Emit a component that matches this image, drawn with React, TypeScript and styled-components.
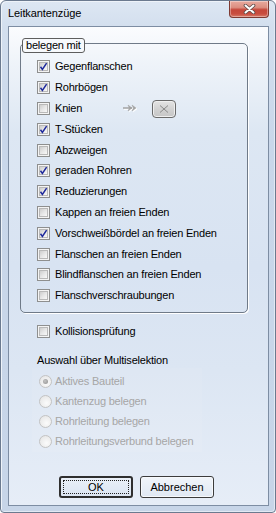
import React from 'react';
import styled, { createGlobalStyle, css } from 'styled-components';

const Global = createGlobalStyle`
  html, body { margin: 0; padding: 0; background: #ffffff; }
  body { font-family: "Liberation Sans", Arial, sans-serif; font-size: 11px; color: #000; }
  * { box-sizing: border-box; }
`;

const Window = styled.div`
  width: 276px;
  height: 513px;
  display: flex;
  flex-direction: column;
  border: 1px solid #6b7a8f;
  border-radius: 6px 6px 4px 4px;
  background: linear-gradient(180deg, #dde7f3 0px, #d3dfee 26px, #c9d7ea 140px, #c7d5e8 100%);
  box-shadow: inset 1px 1px 0 #eef3f9, inset -1px -1px 0 #e2e9f3;
  overflow: hidden;
`;

const TitleBar = styled.div`
  height: 25px;
  flex: 0 0 25px;
  display: flex;
  align-items: flex-start;
`;

const TitleText = styled.div`
  padding: 6px 0 0 7px;
  font-size: 11px;
  line-height: 13px;
  letter-spacing: -0.1px;
  color: #000;
`;

const CloseButton = styled.div`
  margin-left: auto;
  margin-right: 6px;
  width: 40px;
  height: 17px;
  border: 1px solid #7e3a32;
  border-top: none;
  border-radius: 0 0 4px 4px;
  background: linear-gradient(180deg, #e8aa9e 0%, #dc8f81 40%, #c5473a 55%, #c84d3f 80%, #d87a68 100%);
  box-shadow: inset 0 0 0 1px rgba(255, 255, 255, 0.35);
  display: flex;
  align-items: center;
  justify-content: center;
`;

const Client = styled.div`
  flex: 1;
  margin: 0 6px 6px 7px;
  border: 1px solid #7d8da3;
  background: linear-gradient(180deg, #fbfcfe 0%, #eef3f9 8%, #dde7f3 22%, #d8e3f2 50%, #dce6f3 72%, #e6edf7 100%);
  display: flex;
  flex-direction: column;
`;

const Group = styled.div`
  position: relative;
  margin: 16px 20px 0 11px;
  border: 1px solid #6f7a88;
  border-radius: 5px;
  box-shadow: 1px 1px 0 #ffffff;
  padding: 12.6px 0 5.8px 16px;
`;

const Legend = styled.div`
  position: absolute;
  left: 1px;
  top: -6px;
  height: 15px;
  padding: 0 3px;
  border: 1px solid #5e5e5e;
  border-radius: 3px;
  background: #f7f9fc;
  font-size: 11px;
  line-height: 13px;
  letter-spacing: -0.2px;
`;

const Row = styled.div<{ $indent?: number }>`
  height: 20.8px;
  display: flex;
  align-items: center;
  gap: 5px;
  margin-left: ${(p) => p.$indent ?? 0}px;
`;

const Box = styled.span`
  position: relative;
  width: 13px;
  height: 13px;
  flex: 0 0 13px;
  border: 1px solid #8e8f8f;
  background: #f4f4f4;
  display: flex;
  align-items: center;
  justify-content: center;
  &::before {
    content: '';
    position: absolute;
    inset: 1px;
    border: 1px solid #b9b9b9;
    background: linear-gradient(135deg, #cdcdcd 0%, #e6e6e6 50%, #f8f8f8 100%);
  }
  svg { position: relative; }
`;

const Label = styled.span<{ $min?: number; $disabled?: boolean }>`
  font-size: 11px;
  line-height: 13px;
  letter-spacing: -0.2px;
  white-space: nowrap;
  color: ${(p) => (p.$disabled ? '#a6a6a6' : '#000')};
  ${(p) => p.$min && css`min-width: ${p.$min}px;`}
`;

const ArrowIcon = styled.svg`
  flex: 0 0 auto;
  margin-top: 1px;
`;

const SmallButton = styled.div`
  margin-left: 8px;
  width: 24px;
  height: 18px;
  border: 1px solid #6a6a6a;
  border-radius: 4px;
  background: linear-gradient(180deg, #e4e4e4 0%, #d2d2d2 50%, #c6c6c6 100%);
  box-shadow: inset 0 0 0 1px #efefef;
  display: flex;
  align-items: center;
  justify-content: center;
`;

const Kollision = styled(Row)`
  margin-top: 8.6px;
`;

const SectionLabel = styled.div`
  margin: 9.6px 0 0 28px;
  height: 16px;
  line-height: 16px;
  font-size: 11px;
  letter-spacing: -0.2px;
`;

const RadioPanel = styled.div`
  margin: 0 0 0 23px;
  width: 170px;
  padding: 4px 0 0 7px;
  background: rgba(255, 255, 255, 0.07);
  display: flex;
  flex-direction: column;
`;

const RadioRow = styled.div`
  height: 20px;
  display: flex;
  align-items: center;
  gap: 3px;
`;

const RadioCircle = styled.span<{ $on?: boolean }>`
  width: 13px;
  height: 13px;
  flex: 0 0 13px;
  border-radius: 50%;
  border: 1px solid #c3c3c3;
  background: radial-gradient(circle at 60% 65%, #fbfbfb 0%, #ececec 60%, #e0e0e0 100%);
  display: flex;
  align-items: center;
  justify-content: center;
  &::after {
    content: '';
    width: 5px;
    height: 5px;
    border-radius: 50%;
    background: ${(p) => (p.$on ? 'radial-gradient(circle at 40% 40%, #c4c4c4, #8f8f8f)' : 'transparent')};
  }
`;

const ButtonBar = styled.div`
  margin-top: auto;
  margin-bottom: 7px;
  padding-left: 50px;
  display: flex;
  gap: 7px;
`;

const DialogButton = styled.div<{ $default?: boolean }>`
  position: relative;
  width: 74px;
  height: 22px;
  border-radius: 3px;
  display: flex;
  align-items: center;
  justify-content: center;
  font-size: 11px;
  color: #000;
  ${(p) =>
    p.$default
      ? css`
          border: 2px solid #2f2f2f;
          background: linear-gradient(180deg, #eaf0f8 0%, #dbe5f2 100%);
          &::after {
            content: '';
            position: absolute;
            inset: 2px;
            border: 1px dotted #222;
          }
        `
      : css`
          border: 1px solid #3c3c3c;
          background: linear-gradient(180deg, #f1f5fa 0%, #e0e8f3 100%);
          box-shadow: inset 0 0 0 1px #f7f9fc;
        `}
`;

const Check = () => (
  <svg width="9" height="9" viewBox="0 0 9 9">
    <path d="M1.5 4.8 L3.4 7.4 L7.6 1.2" fill="none" stroke="#1f2a9c" strokeWidth="1.5" strokeLinejoin="miter" />
  </svg>
);

const CheckBox = ({ checked }: { checked?: boolean }) => <Box>{checked && <Check />}</Box>;

const items: { label: string; checked?: boolean; extra?: boolean }[] = [
  { label: 'Gegenflanschen', checked: true },
  { label: 'Rohrbögen', checked: true },
  { label: 'Knien', extra: true },
  { label: 'T-Stücken', checked: true },
  { label: 'Abzweigen' },
  { label: 'geraden Rohren', checked: true },
  { label: 'Reduzierungen', checked: true },
  { label: 'Kappen an freien Enden' },
  { label: 'Vorschweißbördel an freien Enden', checked: true },
  { label: 'Flanschen an freien Enden' },
  { label: 'Blindflanschen an freien Enden' },
  { label: 'Flanschverschraubungen' },
];

const radios = [
  { label: 'Aktives Bauteil', on: true },
  { label: 'Kantenzug belegen' },
  { label: 'Rohrleitung belegen' },
  { label: 'Rohrleitungsverbund belegen' },
];

export default function App() {
  return (
    <>
      <Global />
      <Window>
        <TitleBar>
          <TitleText>Leitkantenzüge</TitleText>
          <CloseButton>
            <svg width="13" height="10" viewBox="0 0 13 10">
              <path d="M2.5 1.5 L10.5 8.5 M10.5 1.5 L2.5 8.5" stroke="#5b4a48" strokeWidth="3.6" strokeLinecap="round" />
              <path d="M2.5 1.5 L10.5 8.5 M10.5 1.5 L2.5 8.5" stroke="#ffffff" strokeWidth="2" strokeLinecap="round" />
            </svg>
          </CloseButton>
        </TitleBar>
        <Client>
          <Group>
            <Legend>belegen mit</Legend>
            {items.map((it) => (
              <Row key={it.label}>
                <CheckBox checked={it.checked} />
                {it.extra ? (
                  <>
                    <Label $min={63}>{it.label}</Label>
                    <ArrowIcon width="16" height="10" viewBox="0 0 16 10">
                      <g transform="translate(1,1)" fill="#ffffff" stroke="#ffffff">
                        <path d="M0 4 H9" strokeWidth="1.6" />
                        <path d="M5 1 L9 4 L5 7 L6.4 4Z" strokeWidth="0.5" />
                        <path d="M9 1 L13 4 L9 7 L10.4 4Z" strokeWidth="0.5" />
                      </g>
                      <g fill="#a3a3a3" stroke="#a3a3a3">
                        <path d="M0 4 H9" strokeWidth="1.6" />
                        <path d="M5 1 L9 4 L5 7 L6.4 4Z" strokeWidth="0.5" />
                        <path d="M9 1 L13 4 L9 7 L10.4 4Z" strokeWidth="0.5" />
                      </g>
                    </ArrowIcon>
                    <SmallButton>
                      <svg width="10" height="8" viewBox="0 0 10 8">
                        <path d="M1 0.5 L9 7.5 M9 0.5 L1 7.5" stroke="#8a8a8a" strokeWidth="1" />
                      </svg>
                    </SmallButton>
                  </>
                ) : (
                  <Label>{it.label}</Label>
                )}
              </Row>
            ))}
          </Group>
          <Kollision $indent={28}>
            <CheckBox />
            <Label>Kollisionsprüfung</Label>
          </Kollision>
          <SectionLabel>Auswahl über Multiselektion</SectionLabel>
          <RadioPanel>
            {radios.map((r) => (
              <RadioRow key={r.label}>
                <RadioCircle $on={r.on} />
                <Label $disabled>{r.label}</Label>
              </RadioRow>
            ))}
          </RadioPanel>
          <ButtonBar>
            <DialogButton $default>OK</DialogButton>
            <DialogButton>Abbrechen</DialogButton>
          </ButtonBar>
        </Client>
      </Window>
    </>
  );
}
